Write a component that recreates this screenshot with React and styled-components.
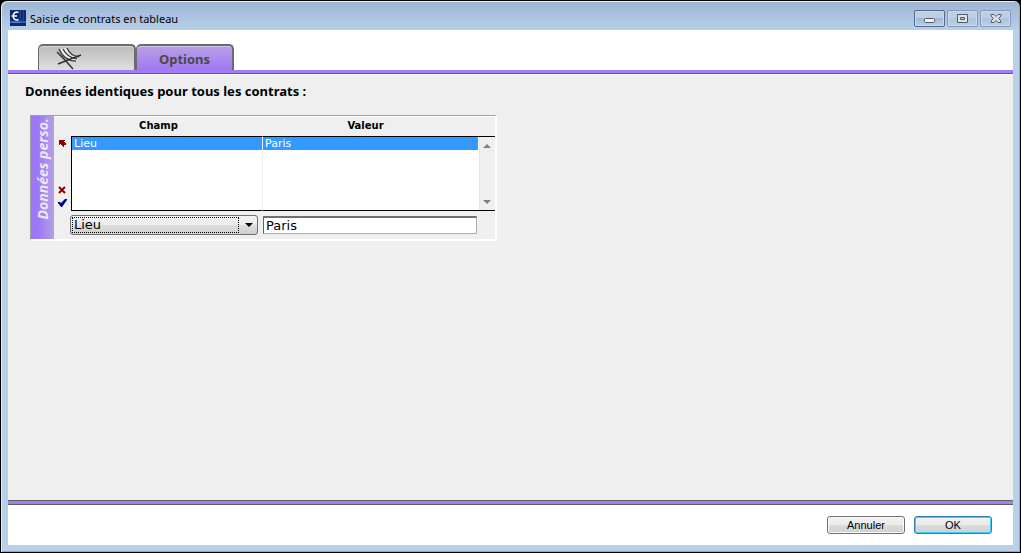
import React from "react";
import styled, { createGlobalStyle } from "styled-components";

const GlobalStyle = createGlobalStyle`
  *, *::before, *::after { box-sizing: border-box; }
  body { margin: 0; background: #000; }
  button, input, select { font: inherit; margin: 0; }
`;

const ui = `"DejaVu Sans", Verdana, sans-serif`;

const Window = styled.div`
  min-height: 100vh;
  display: flex;
  flex-direction: column;
  padding: 0 6px 7px;
  border: 1px solid #000;
  border-radius: 7px 7px 0 0;
  background: linear-gradient(#9cb5d3 0, #b9d0ea 30px, #b9d0ea 100%);
  box-shadow: inset 1px 1px #e4eefa, inset -1px -1px #3fc8e8;
  font-family: ${ui};
  color: #000;
`;

const TitleBar = styled.header`
  display: flex;
  align-items: center;
  height: 29px;
  padding: 5px 0 0 3px;
  gap: 4px;
`;

const Title = styled.h1`
  flex: 1;
  margin: 0;
  padding-top: 2px;
  font: 11px/16px "Noto Sans", "Segoe UI", sans-serif;
`;

const Controls = styled.div`
  display: flex;
  gap: 2px;
  padding-right: 3px;
`;

const ControlButton = styled.button`
  display: grid;
  place-items: center;
  width: 31px;
  height: 17px;
  padding: 0;
  border: 1px solid ${(p) => (p.$strong ? "#56698a" : "#8499b8")};
  border-radius: 2px;
  box-shadow: inset 0 0 0 1px #c9daee;
  background: linear-gradient(#bccfe5 50%, ${(p) => (p.$strong ? "#9db7d3" : "#adc5e0")} 50%, #bad0e8);
`;

const Client = styled.main`
  flex: 1;
  display: flex;
  flex-direction: column;
  margin: 0 1px;
  background: #fff;
`;

const TabBar = styled.nav`
  display: flex;
  align-items: flex-end;
  height: 44px;
  padding: 0 30px;
  border-bottom: 1px solid #5f5f5f;
  box-shadow: inset 0 -3px #a07cf6;
`;

const Tab = styled.button`
  display: flex;
  align-items: center;
  width: 98px;
  height: 26px;
  margin-bottom: 3px;
  padding: 2px 16px 0;
  justify-content: ${(p) => (p.$active ? "center" : "flex-start")};
  border: 2px solid #6b6b6b;
  border-bottom: 0;
  border-left-width: 1px;
  border-radius: 5px 5px 0 0;
  background: ${(p) => (p.$active ? "linear-gradient(#b9a0e4, #a078f4)" : "linear-gradient(#bcbcbc, #dedede)")};
  box-shadow: inset 0 1px #ffffff66;
  color: #4a4a4a;
  font: bold 13px/18px "Noto Sans", sans-serif;
`;

const Content = styled.section`
  flex: 1;
  padding: 8px 17px;
  border-top: 1px solid #fff;
  background: #efefef;
`;

const Heading = styled.h2`
  margin: 0 0 16px;
  font: bold 13px/16px "Noto Sans", sans-serif;
`;

const Panel = styled.div`
  display: flex;
  width: 467px;
  max-width: 100%;
  height: 126px;
  margin-left: 5px;
  border: 1px solid #a0a0a0;
  border-right: 2px solid #fff;
  border-bottom: 2px solid #fff;
  box-shadow: inset 0 1px #fff;
`;

const SideLabel = styled.div`
  display: grid;
  justify-items: center;
  align-items: start;
  width: 23px;
  padding-top: 2px;
  background: linear-gradient(90deg, #9c78f6 30%, #b4a0e4);
  color: #ece6fa;
  font: italic bold 14px/20px "Noto Sans", sans-serif;
  white-space: nowrap;
  span { writing-mode: vertical-rl; rotate: 180deg; }
`;

const Tools = styled.div`
  display: flex;
  flex-direction: column;
  width: 17px;
  padding: 22px 3px 0 4px;
`;

const ToolButton = styled.button`
  display: block;
  height: 10px;
  padding: 0;
  border: 0;
  background: none;
  margin-bottom: ${(p) => p.$after || 0}px;
  svg { display: block; }
`;

const Editor = styled.div`
  flex: 1;
  min-width: 0;
`;

const ListBox = styled.div`
  display: flex;
`;

const Table = styled.table`
  flex: 1;
  border-collapse: separate;
  border-spacing: 0;
  table-layout: fixed;
  font-size: 11px;
  line-height: 13px;
  th { height: 20px; padding: 0 10px 0 0; font-size: 10px; line-height: 18px; text-align: center; }
  th:first-child { width: 192px; padding-right: 17px; }
  td { padding: 0 2px; background: #fff; }
  td:first-child { border-left: 1px solid #000; border-right: 1px solid #efefef; }
  tbody tr:first-child td { border-top: 1px solid #000; }
  tbody tr:last-child td { height: 61px; border-bottom: 1px solid #000; }
`;

const SelectedRow = styled.tr`
  color: #fff;
  td { height: 14px; background: #3399ff; }
`;

const ScrollBar = styled.div`
  display: flex;
  flex-direction: column;
  justify-content: space-between;
  align-items: center;
  width: 17px;
  height: 75px;
  margin-top: 20px;
  padding: 7px 0 6px;
  border-top: 1px solid #000;
  border-bottom: 1px solid #000;
  box-shadow: inset 1px 0 #fff, inset 2px 0 #e3e3e3;
`;

const Fields = styled.div`
  display: flex;
  align-items: center;
  gap: 5px;
  padding-top: 4px;
  font-size: 13px;
`;

const SelectWrap = styled.div`
  display: grid;
  align-items: center;
  width: 188px;
  margin-left: -1px;
  > * { grid-area: 1 / 1; }
  svg { justify-self: end; margin-right: 5px; pointer-events: none; }
`;

const Select = styled.select`
  appearance: none;
  width: 100%;
  height: 20px;
  padding: 0 3px 1px;
  border: 1px solid #707070;
  border-radius: 3px;
  background: linear-gradient(#f2f2f2, #ebebeb 50%, #dddddd 50%, #cfcfcf);
  color: #000;
`;

const FocusMark = styled.span`
  height: 16px;
  margin: 0 19px 0 2px;
  border: 1px dotted #000;
  pointer-events: none;
`;

const TextInput = styled.input`
  width: 214px;
  height: 18px;
  padding: 0 2px;
  border: 1px solid #abadb3;
  border-top: 2px solid #707070;
  border-left-color: #606060;
  outline: 0;
  background: #fff;
`;

const Footer = styled.footer`
  display: flex;
  justify-content: flex-end;
  gap: 9px;
  height: 45px;
  padding: 11px 21px 0;
  border-top: 1px solid #5f5f5f;
  box-shadow: inset 0 3px #a07cf6, inset 0 4px #5f5f5f;
`;

const Button = styled.button`
  width: 78px;
  height: 18px;
  margin-top: 4px;
  padding: 0;
  border: 1px solid ${(p) => (p.$default ? "#2f7fae" : "#707070")};
  border-radius: 3px;
  background: linear-gradient(#f2f2f2, #ebebeb 50%, #dddddd 50%, #cfcfcf);
  box-shadow: inset 0 0 0 1px ${(p) => (p.$default ? "#3fd0fa" : "#fbfbfb")};
  color: #000;
  font: 11px/14px "Liberation Sans", Arial, sans-serif;
`;

const AppIcon = () => (
  <svg width="16" height="16" viewBox="0 0 16 16" aria-hidden="true">
    <path fill="#0d2a72" d="M0 0h16v16H0z" />
    <path fill="#2f5fb5" d="M0 11h16v2H0z" />
    <path fill="#5c88cf" d="M2 12h8v1H2z" />
    <path fill="#234a9c" d="M10 0h1v11h-1zM13 0h1v11h-1z" />
    <path fill="none" stroke="#fff" strokeWidth="1.600" d="M8.500 2.500C5.500 1 3.200 3 3.200 6s2.300 5 5.300 3.500M1.500 6h5.500" />
  </svg>
);

const Chair = () => (
  <svg width="28" height="22" viewBox="0 0 28 22" aria-hidden="true">
    <path fill="#f2f2f2" d="M5 1 13 0C15 5 18 8 24 9L22 13C14 13 9 9 5 1Z" />
    <path stroke="#444" strokeWidth="1.500" fill="none" d="M4 1C7 8 12 13 21 13M8 1C11 7 15 10 22 11M12 0C14 5 17 8 24 9" />
    <path stroke="#333" strokeWidth="1.500" fill="none" d="M2 4 9 11 18 21M3 16 13 12 26 7" />
  </svg>
);

const Triangle = ({ up, color = "#808080", size = 8 }) => (
  <svg width={size} height="4" viewBox="0 0 8 4" aria-hidden="true">
    <path fill={color} d={up ? "M0 4 4 0 8 4Z" : "M0 0h8L4 4Z"} />
  </svg>
);

export default function App() {
  return (
    <Window>
      <GlobalStyle />
      <TitleBar>
        <AppIcon />
        <Title>Saisie de contrats en tableau</Title>
        <Controls>
          <ControlButton $strong aria-label="Réduire">
            <svg width="11" height="9"><rect x=".5" y="4.500" width="10" height="4" rx="1" fill="#f4f0ee" stroke="#555a70" /></svg>
          </ControlButton>
          <ControlButton aria-label="Agrandir">
            <svg width="11" height="9"><path fill="#e0dfe2" fillRule="evenodd" stroke="#555a70" d="M.5.5h10v8H.5zM3.500 3.500h4v2h-4z" /></svg>
          </ControlButton>
          <ControlButton aria-label="Fermer">
            <svg width="12" height="9"><path fill="#e0dfe2" stroke="#555a70" d="M1 .5h3L6 2.500 8 .5h3V2L8.500 4.500 11 7v1.500H8L6 6.500 4 8.500H1V7l2.500-2.500L1 2Z" /></svg>
          </ControlButton>
        </Controls>
      </TitleBar>
      <Client>
        <TabBar>
          <Tab aria-label="Contrats"><Chair /></Tab>
          <Tab $active>Options</Tab>
        </TabBar>
        <Content>
          <Heading>Données identiques pour tous les contrats :</Heading>
          <Panel>
            <SideLabel><span>Données perso.</span></SideLabel>
            <Tools>
              <ToolButton $after={37} aria-label="Reprendre">
                <svg width="8" height="8"><path fill="#900000" d="M1 1h6v1H6v1h1v1h1v2H6v2H5V7H4V6H3V5H2v1H1z" /></svg>
              </ToolButton>
              <ToolButton $after={3} aria-label="Supprimer">
                <svg width="9" height="9"><path stroke="#900000" strokeWidth="2" d="m1 1 6 6M7 1 1 7" /></svg>
              </ToolButton>
              <ToolButton aria-label="Valider">
                <svg width="10" height="8"><path fill="#000090" d="M0 3h2l1 1L7 0h2v1L4 8H3L0 4z" /></svg>
              </ToolButton>
            </Tools>
            <Editor>
              <ListBox>
                <Table>
                  <thead><tr><th>Champ</th><th>Valeur</th></tr></thead>
                  <tbody>
                    <SelectedRow><td>Lieu</td><td>Paris</td></SelectedRow>
                    <tr><td /><td /></tr>
                  </tbody>
                </Table>
                <ScrollBar><Triangle up /><Triangle /></ScrollBar>
              </ListBox>
              <Fields>
                <SelectWrap>
                  <Select aria-label="Champ" defaultValue="Lieu"><option>Lieu</option></Select>
                  <FocusMark />
                  <Triangle color="#000" />
                </SelectWrap>
                <TextInput aria-label="Valeur" defaultValue="Paris" />
              </Fields>
            </Editor>
          </Panel>
        </Content>
        <Footer>
          <Button>Annuler</Button>
          <Button $default>OK</Button>
        </Footer>
      </Client>
    </Window>
  );
}
